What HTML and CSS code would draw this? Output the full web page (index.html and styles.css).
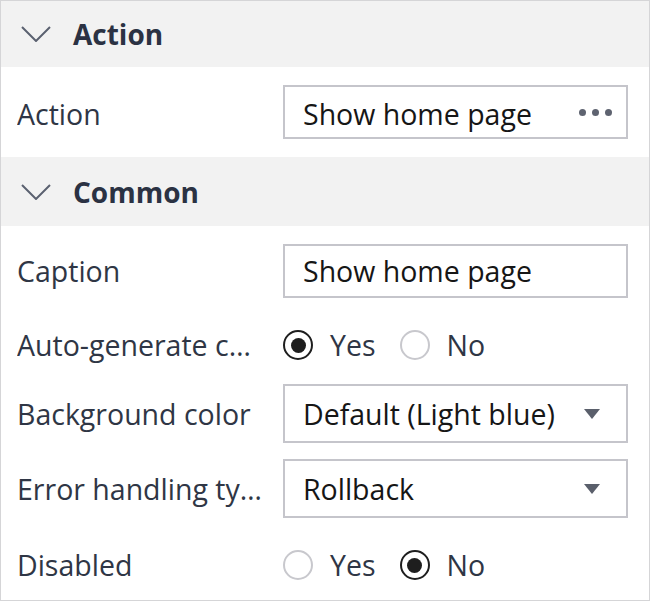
FILE: index.html
```html
<!DOCTYPE html>
<html lang="en">
<head>
<meta charset="utf-8">
<title>Properties</title>
<link rel="stylesheet" href="styles.css">
</head>
<body>
<div class="panel">
  <section class="section">
    <div class="section-head section-head--first">
      <svg class="chevron" width="30" height="16" viewBox="0 0 30 16"><polyline points="1,1 15,15 29,1" fill="none" stroke="#5b6170" stroke-width="2"/></svg>
      <span class="section-title">Action</span>
    </div>
    <div class="section-body">
      <div class="row row--first">
        <div class="label">Action</div>
        <div class="control">
          <div class="box box--picker">
            <span class="value">Show home page</span>
            <span class="dots"><i></i><i></i><i></i></span>
          </div>
        </div>
      </div>
    </div>
  </section>
  <section class="section">
    <div class="section-head">
      <svg class="chevron" width="30" height="16" viewBox="0 0 30 16"><polyline points="1,1 15,15 29,1" fill="none" stroke="#5b6170" stroke-width="2"/></svg>
      <span class="section-title">Common</span>
    </div>
    <div class="section-body">
      <div class="row">
        <div class="label">Caption</div>
        <div class="control">
          <div class="box"><span class="value">Show home page</span></div>
        </div>
      </div>
      <div class="row row--radio">
        <div class="label" title="Auto-generate caption">Auto-generate c…</div>
        <div class="control radios">
          <span class="radio-opt"><span class="radio radio--on"></span>Yes</span>
          <span class="radio-opt"><span class="radio"></span>No</span>
        </div>
      </div>
      <div class="row row--select">
        <div class="label">Background color</div>
        <div class="control">
          <div class="box box--select"><span class="value">Default (Light blue)</span><span class="caret"></span></div>
        </div>
      </div>
      <div class="row row--select">
        <div class="label" title="Error handling type">Error handling ty…</div>
        <div class="control">
          <div class="box box--select"><span class="value">Rollback</span><span class="caret"></span></div>
        </div>
      </div>
      <div class="row row--radio">
        <div class="label">Disabled</div>
        <div class="control radios">
          <span class="radio-opt"><span class="radio"></span>Yes</span>
          <span class="radio-opt"><span class="radio radio--on"></span>No</span>
        </div>
      </div>
    </div>
  </section>
</div>
</body>
</html>
```
FILE: styles.css
```css
body {
  margin: 0;
  font-family: "Open Sans", "Noto Sans", sans-serif;
  background: #fff;
}

.panel {
  width: 650px;
  height: 601px;
  box-sizing: border-box;
  border: 1px solid #d5d5d7;
  background: #fff;
  overflow: hidden;
}

.section-head {
  display: flex;
  align-items: center;
  gap: 22px;
  height: 69px;
  padding-left: 20px;
  background: #f2f2f2;
}

.section-head--first {
  height: 66px;
}

.chevron {
  display: block;
  flex: none;
}

.section-title {
  font-size: 28px;
  font-weight: 700;
  color: #2b3243;
}

.section-body {
  display: flex;
  flex-direction: column;
  padding: 18px 21px 18px 16px;
}

.row {
  display: flex;
  align-items: center;
}

.row--first .label,
.row--first .value {
  padding-top: 4px;
}

.row--radio {
  margin-top: 28px;
}

.row--radio + .row {
  margin-top: 20px;
}

.row--select + .row--select {
  margin-top: 16px;
}

.row--select + .row--radio {
  margin-top: 28px;
}

.label {
  width: 246px;
  margin-right: 20px;
  flex: none;
  font-size: 28.5px;
  line-height: 38px;
  color: #2f3645;
  white-space: nowrap;
  overflow: hidden;
}

.control {
  flex: 1;
  min-width: 0;
}

.box {
  display: flex;
  align-items: center;
  height: 54px;
  box-sizing: border-box;
  border: 2px solid #c5c5cb;
  padding: 0 14px 0 18px;
  font-size: 28.5px;
  color: #161616;
  background: #fff;
}

.box--select {
  height: 59px;
  padding-right: 26px;
}

.value {
  flex: 1;
  white-space: nowrap;
}

.dots {
  display: flex;
  gap: 6px;
}

.dots i {
  width: 7px;
  height: 7px;
  border-radius: 50%;
  background: #5e6370;
}

.caret {
  width: 0;
  height: 0;
  border-left: 8px solid transparent;
  border-right: 8px solid transparent;
  border-top: 10px solid #5a5f6b;
}

.radios {
  display: flex;
  align-items: center;
  height: 38px;
}

.radio-opt {
  display: flex;
  align-items: center;
  gap: 17px;
  margin-right: 24px;
  font-size: 28.5px;
  line-height: 38px;
  color: #2f3645;
}

.radio {
  width: 30px;
  height: 30px;
  box-sizing: border-box;
  border: 2px solid #c8c8cd;
  border-radius: 50%;
  display: flex;
  align-items: center;
  justify-content: center;
}

.radio--on {
  border-color: #1e1e1e;
}

.radio--on::after {
  content: "";
  width: 15px;
  height: 15px;
  border-radius: 50%;
  background: #1e1e1e;
}
```
